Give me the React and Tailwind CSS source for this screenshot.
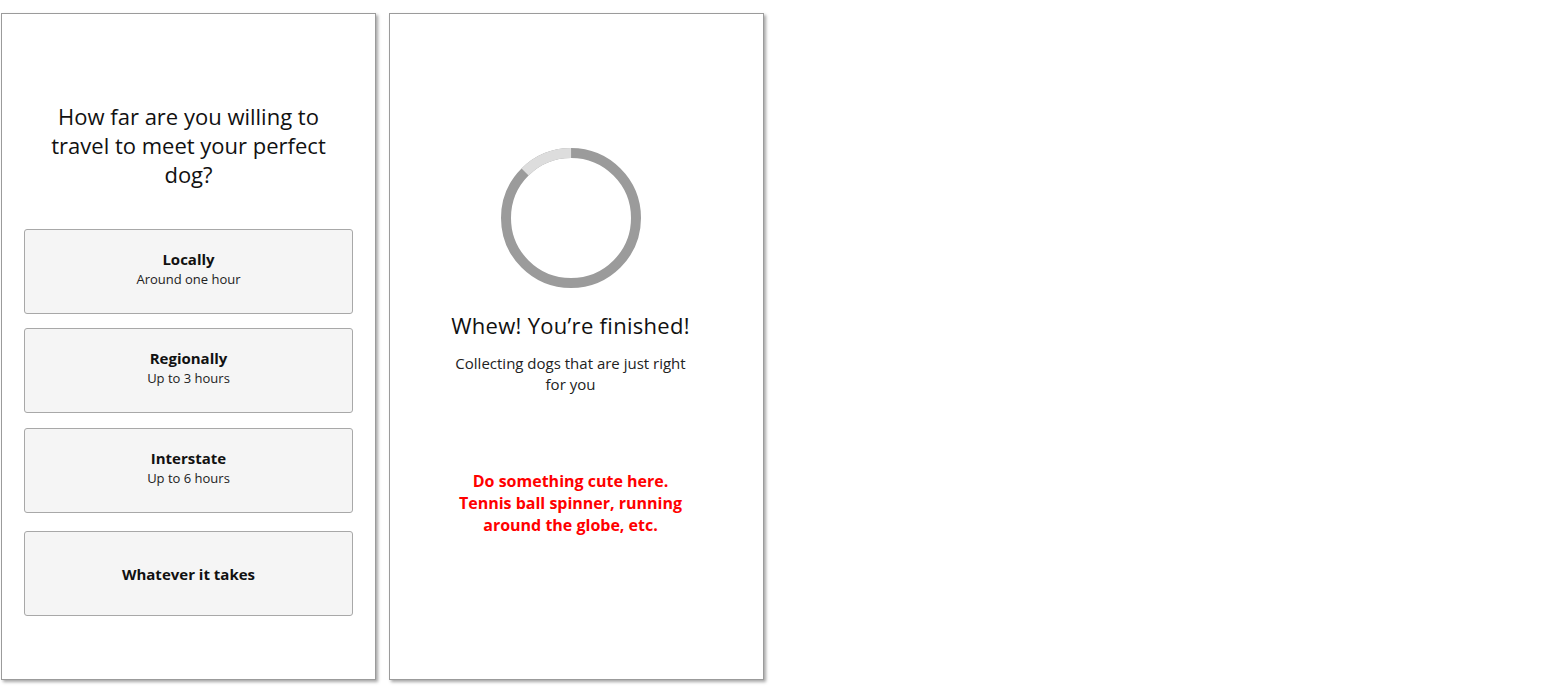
const font = { fontFamily: '"Open Sans", Lato, sans-serif' };

const options = [
  { title: 'Locally', sub: 'Around one hour', mt: 'mt-0' },
  { title: 'Regionally', sub: 'Up to 3 hours', mt: 'mt-[14px]' },
  { title: 'Interstate', sub: 'Up to 6 hours', mt: 'mt-[15px]' },
  { title: 'Whatever it takes', mt: 'mt-[18px]' },
];

function Spinner() {
  const r = 65;
  const c = 2 * Math.PI * r;
  const light = c / 8;
  return (
    <svg width="150" height="150" viewBox="0 0 150 150">
      <circle cx="75" cy="75" r={r} fill="none" stroke="#9b9b9b" strokeWidth="10" />
      <circle
        cx="75"
        cy="75"
        r={r}
        fill="none"
        stroke="#dddddd"
        strokeWidth="10"
        strokeDasharray={`${light} ${c}`}
        transform="rotate(-135 75 75)"
      />
    </svg>
  );
}

export default function App() {
  return (
    <div className="flex gap-[13px] pl-[1px] pt-[13px] bg-white min-h-[692px]" style={font}>
      <div className="w-[375px] h-[667px] bg-white border border-[#9b9b9b] shadow-[2px_2px_3px_rgba(0,0,0,0.35)] flex flex-col items-center">
        <h1 className="mt-[88px] w-[300px] text-center text-[22px] leading-[29px] text-[#111]">
          How far are you willing to travel to meet your perfect dog?
        </h1>
        <div className="mt-[40px] flex flex-col w-[329px]">
          {options.map((o) => (
            <button
              key={o.title}
              className={`${o.mt} h-[85px] w-full bg-[#f5f5f5] border border-[#a8a8a8] rounded-[3px] flex flex-col items-center justify-center ${o.sub ? 'pb-[6px]' : ''}`}
            >
              <span className="text-[15px] font-bold leading-[20px] text-[#111]">{o.title}</span>
              {o.sub && <span className="text-[13px] leading-[20px] text-[#222]">{o.sub}</span>}
            </button>
          ))}
        </div>
      </div>

      <div className="w-[375px] h-[667px] bg-white border border-[#9b9b9b] shadow-[2px_2px_3px_rgba(0,0,0,0.35)] flex flex-col items-center pr-[12px]">
        <div className="mt-[129px]">
          <Spinner />
        </div>
        <h2 className="mt-[18px] text-[22px] tracking-[0.3px] leading-[29px] text-[#111]">Whew! You’re finished!</h2>
        <p className="mt-[13px] w-[236px] text-center text-[15px] leading-[21px] text-[#222]">
          Collecting dogs that are just right for you
        </p>
        <p className="mt-[75px] w-[250px] text-center text-[16px] leading-[22px] font-bold text-[#ff0000]">
          Do something cute here.
          <br />
          Tennis ball spinner, running around the globe, etc.
        </p>
      </div>
    </div>
  );
}
